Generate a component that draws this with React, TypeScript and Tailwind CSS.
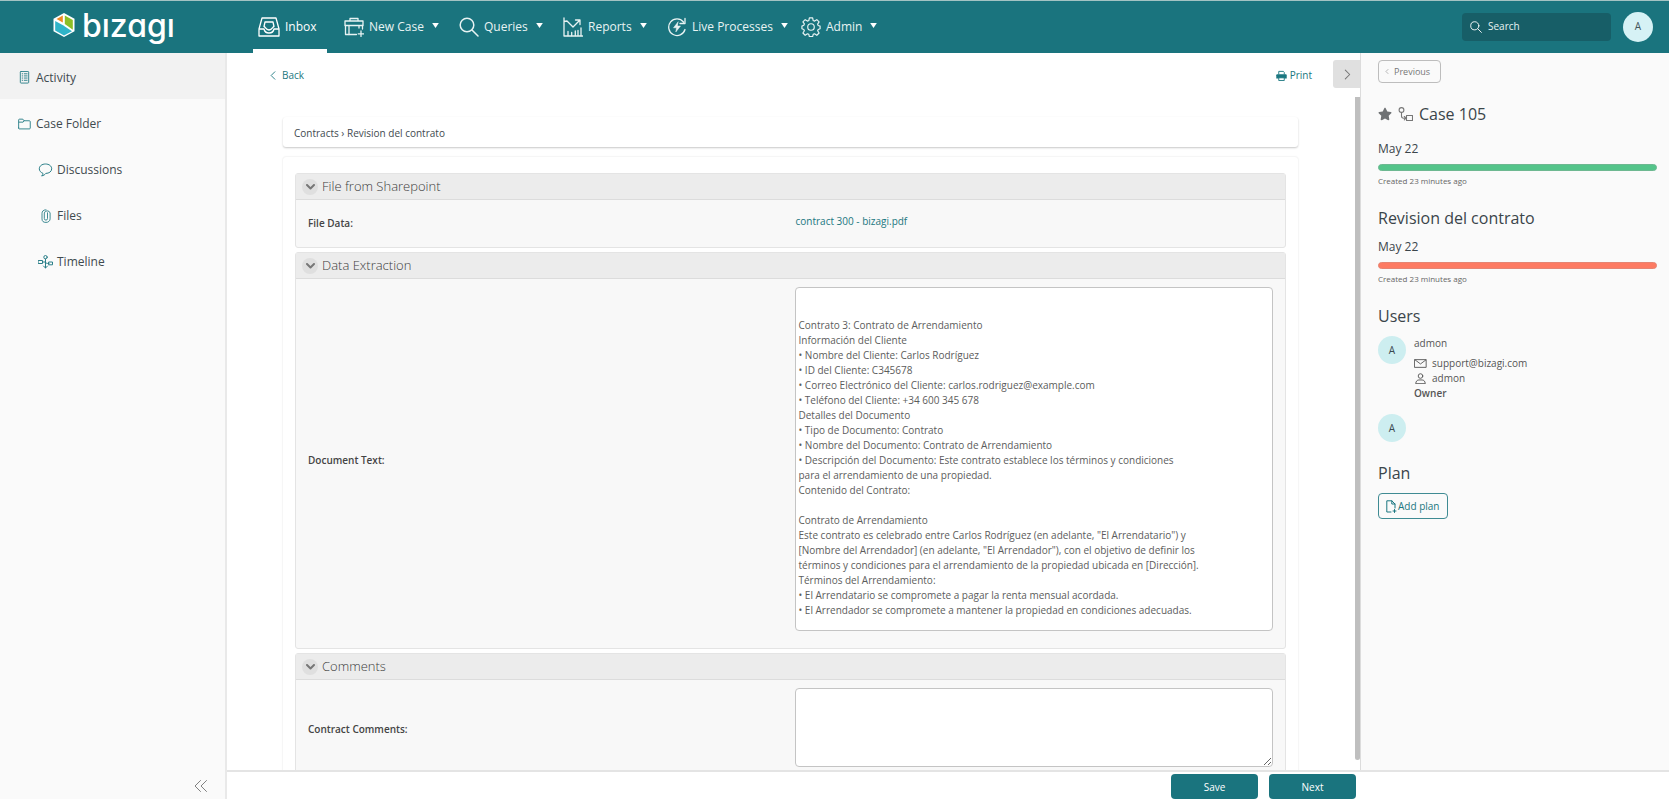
import React from "react";
import { FaStar } from "react-icons/fa";

type IconProps = { className?: string };

function Svg({ className, box, children, width = 1.3 }: IconProps & { box: string; children: React.ReactNode; width?: number }) {
  return (
    <svg className={className} viewBox={box} fill="none" stroke="currentColor" strokeWidth={width} strokeLinecap="round" strokeLinejoin="round" aria-hidden="true">
      {children}
    </svg>
  );
}

const InboxIcon = (p: IconProps) => (
  <Svg {...p} box="0 0 22 20">
    <path d="M4 1h14l3 11v7H1v-7z" />
    <path d="M1.500 12H6c.5 2.500 2 4 5 4s4.500-1.500 5-4h4.500" />
    <path d="M6 9.500 7 5h8l1 4.500c-1.200 0-1.800 3.500-5 3.500s-3.800-3.500-5-3.500z" />
  </Svg>
);

const NewCaseIcon = (p: IconProps) => (
  <Svg {...p} box="0 0 20 20">
    <path d="M12.500 17.500H1.500V8.500M18.500 8.500V12" />
    <path d="M1 4h18v4.500H1zM6 4V1.500h8V4M5 8.500v9M15 8.500v2.500" />
    <path d="M17 14v5.500M14.200 16.800h5.500" />
  </Svg>
);

const SearchIcon = (p: IconProps) => (
  <Svg {...p} box="0 0 20 20" width={1.5}>
    <circle cx="8" cy="8" r="6.800" />
    <path d="m13 13 6 6" />
  </Svg>
);

const ReportsIcon = (p: IconProps) => (
  <Svg {...p} box="0 0 20 20">
    <path d="M1 1v18h18.500M1 4.500 4 4l6 6 6.500-6.500M12.500 3H17v4.500" />
    <path d="M5 18.500v-4M8.700 18.500v-3M12.300 18.500v-4.500M15 18.500v-5M18 18.500V11" />
  </Svg>
);

const LiveIcon = (p: IconProps) => (
  <Svg {...p} box="0 0 20 20">
    <path d="M18 12.500A8.300 8.300 0 1 1 16.500 5M18 1.500v5h-5" />
    <path d="M11 5 6.500 10.800h3L8.800 15l4.700-6h-3z" fill="currentColor" strokeWidth="0.500" />
  </Svg>
);

const GearIcon = (p: IconProps) => (
  <Svg {...p} box="0 0 22 22">
    <circle cx="11" cy="11" r="3.600" />
    <path d="M9.200 1h3.600l.6 2.900 1.500.6 2.500-1.600 2.500 2.500-1.600 2.500.6 1.500 2.100.6v2.900l-2.100.9-.6 1.300 1.600 2.500-2.500 2.500-2.500-1.600-1.500.6-.6 2.400H9.200l-.6-2.400-1.500-.6-2.500 1.600-2.500-2.500 1.600-2.500-.6-1.300L1 12.900V10l2.100-.9.6-1.500-1.600-2.200 2.500-2.500 2.500 1.600 1.500-.6z" />
  </Svg>
);

const ActivityIcon = (p: IconProps) => (
  <Svg {...p} box="0 0 10 14" width={1}>
    <rect x=".500" y=".500" width="9" height="12.500" rx=".800" />
    <path d="M2.500 3h.5M4.800 3h3M2.500 5.300h.5M4.800 5.300h3M2.500 7.600h.5M4.800 7.600h3M2.500 10h.5M4.800 10h3" />
  </Svg>
);

const FolderIcon = (p: IconProps) => (
  <Svg {...p} box="0 0 14 12" width={1}>
    <path d="M.7 10.300V1.700c0-.6.300-.9.900-.9h3.600l1.300 1.700h5.800c.6 0 .9.400.9 1v6.800c0 .6-.3 1-.9 1H1.600c-.6 0-.9-.4-.9-1zM1 4h4.500l1-1.500" />
  </Svg>
);

const ChatIcon = (p: IconProps) => (
  <Svg {...p} box="0 0 14 14" width={1}>
    <path d="M3.500 12.800c.8-.8 1-1.600.8-2.600C2.200 9.500.8 7.800.8 5.800.8 3 3.500 1 7 1s6.200 2 6.200 4.800S10.500 10.400 7.300 10.400c-.8 1.200-2.200 2.200-3.800 2.400z" />
  </Svg>
);

const ClipIcon = (p: IconProps) => (
  <Svg {...p} box="0 0 12 14" width={0.9}>
    <path d="M8 3.800v5.700a1.600 1.600 0 0 1-3.200 0V4a3 2.900 0 0 1 5.800 0v5.800A3.900 3.600 0 0 1 6.500 13.400 3.900 3.600 0 0 1 2.500 9.800V4.500C2.500 2.500 3.500.8 6.500.8" />
  </Svg>
);

const TimelineIcon = (p: IconProps) => (
  <Svg {...p} box="0 0 15 14" width={1}>
    <circle cx="7.500" cy="2.200" r="1.700" />
    <rect x=".500" y="5.500" width="4" height="3" />
    <rect x="11" y="7" width="3.500" height="2.800" />
    <path d="M4.500 7h3v6M7.500 4v3c0 1 .8 1.500 3.500 1.500M5.500 11l2 2 2-2" />
  </Svg>
);

const PrintIcon = (p: IconProps) => (
  <svg className={p.className} viewBox="0 0 12 12" aria-hidden="true">
    <path d="M3 5V1.500h5L9 2.500V5" fill="#fff" stroke="currentColor" />
    <path d="M1.500 4.500h9c.8 0 1.200.5 1.200 1.200v3.600H.3V5.700c0-.7.400-1.200 1.200-1.200z" fill="currentColor" />
    <path d="M3 8.500h6v3H3z" fill="#fff" stroke="currentColor" />
  </svg>
);

const FlowIcon = (p: IconProps) => (
  <Svg {...p} box="0 0 15 15" width={1.1}>
    <circle cx="3.500" cy="3" r="2.400" />
    <path d="M3.500 5.500V9c0 1.600.8 2.200 2.200 2.200H8M6.300 9.500l1.700 1.700-1.700 1.700" />
    <rect x="8.500" y="8.500" width="6" height="5" />
  </Svg>
);

const MailIcon = (p: IconProps) => (
  <Svg {...p} box="0 0 14 10" width={1}>
    <rect x=".700" y=".700" width="12.600" height="8.600" />
    <path d="m1 1 6 4.500L13 1" />
  </Svg>
);

const PersonIcon = (p: IconProps) => (
  <Svg {...p} box="0 0 12 12" width={1}>
    <circle cx="6" cy="3.300" r="2.500" />
    <path d="M.800 11.200c.2-2.400 1.700-3.600 3.500-3.600h3.400c1.800 0 3.300 1.200 3.500 3.600z" />
  </Svg>
);

const AddDocIcon = (p: IconProps) => (
  <Svg {...p} box="0 0 11 13" width={1}>
    <path d="M5 12H.8V.8h5L9 4v4M5.800.8V4H9M8.500 9.500v3M7 11h3" />
  </Svg>
);

const Chevron = ({ className, d }: IconProps & { d: string }) => (
  <Svg className={className} box="0 0 8 12" width={1.2}>
    <path d={d} />
  </Svg>
);
const LEFT = "M6.500 1 1.500 6l5 5";
const RIGHT = "m1.500 1 5 5-5 5";

function Logo() {
  return (
    <a href="#home" aria-label="bizagi" className="flex w-[253px] shrink-0 items-center gap-1.5 pl-[52px] text-white">
      <svg viewBox="0 0 24 26" className="mb-1 h-[26px] w-6" aria-hidden="true">
        <path d="M12 1 22.500 6.800v12.400L12 25 1.500 19.200V6.800z" fill="#fff" />
        <path d="M10.800 3.500V10.500L4.500 7z" fill="#f08a24" />
        <path d="M12.800 3.500 20.800 8v9.800L12.800 12z" fill="#8cbf26" />
        <path d="M3.200 9 11 13.200 20 19.200 12 23.500 3.200 18.500z" fill="#2fb4c8" />
      </svg>
      <span className="pb-0.5 font-['Inter',sans-serif] text-[32px] leading-[48px] font-medium [font-feature-settings:'cv11']">bızagı</span>
    </a>
  );
}

const menus = [
  { label: "New Case", Icon: NewCaseIcon, width: "w-[115px]" },
  { label: "Queries", Icon: SearchIcon, width: "w-[104px]" },
  { label: "Reports", Icon: ReportsIcon, width: "w-[104px]" },
  { label: "Live Processes", Icon: LiveIcon, width: "w-[134px]" },
  { label: "Admin", Icon: GearIcon, width: "w-[90px]" },
];

function Header() {
  return (
    <header className="flex h-[53px] shrink-0 border-t border-[#a3c3c3] bg-[#1a747e] text-xs text-white">
      <Logo />
      <nav className="flex">
        <a href="#inbox" className="mr-[17px] flex w-[74px] items-center gap-[5px] border-b-4 border-white pt-1 pl-[5px]">
          <InboxIcon className="h-5 w-[22px]" />
          Inbox
        </a>
        {menus.map(({ label, Icon, width }) => (
          <button key={label} className={`flex items-center gap-[5px] whitespace-nowrap text-[#e8f3f3] ${width}`}>
            <Icon className="size-5 shrink-0" />
            {label}
            <svg viewBox="0 0 8 6" className="mb-[3px] ml-[3px] h-[5px] w-[7px] fill-white" aria-hidden="true">
              <path d="M0 0h8L4 6z" />
            </svg>
          </button>
        ))}
      </nav>
      <div className="ml-auto flex items-center gap-3 pr-4 pb-px">
        <label className="flex h-7 w-[149px] items-center gap-1.5 rounded bg-[#175e67] px-2">
          <SearchIcon className="size-3 shrink-0" />
          <input type="search" aria-label="Search" placeholder="Search" className="w-full min-w-0 bg-transparent text-[10px] outline-none placeholder:text-[#e8f3f3]" />
        </label>
        <button className="size-[30px] rounded-full bg-[#d6f2f5] text-[10px] text-[#44565a]">A</button>
      </div>
    </header>
  );
}

const folderItems = [
  { label: "Discussions", Icon: ChatIcon },
  { label: "Files", Icon: ClipIcon },
  { label: "Timeline", Icon: TimelineIcon },
];

function Sidebar() {
  return (
    <aside className="flex w-[227px] shrink-0 flex-col border-r-2 border-[#e9e9e9] bg-[#fafafa] text-xs text-[#3f4a4f]">
      <a href="#activity" className="flex h-[46px] items-center gap-[5px] bg-[#f2f2f2] pt-[3px] pl-[18px]">
        <ActivityIcon className="h-[13px] w-[13px] text-[#2a7f88]" />
        Activity
      </a>
      <a href="#folder" className="flex h-[46px] items-center gap-[5px] pt-[3px] pl-[18px]">
        <FolderIcon className="h-3 w-[13px] text-[#2a7f88]" />
        Case Folder
      </a>
      {folderItems.map(({ label, Icon }) => (
        <a key={label} href={`#${label}`} className="flex h-[46px] items-center gap-1 pt-[3px] pl-[38px]">
          <Icon className="h-[14px] w-[15px] text-[#2a7f88]" />
          {label}
        </a>
      ))}
      <button aria-label="Collapse menu" className="mt-auto mb-[7px] ml-[194px] w-[14px] text-[#808080]">
        <Svg className="h-3 w-[14px]" box="0 0 14 12" width={1}>
          <path d="m6.500.5-5.500 5.500 5.500 5.500M12.500.5 7 6l5.500 5.500" />
        </Svg>
      </button>
    </aside>
  );
}

function Section({ title, children }: { title: string; children: React.ReactNode }) {
  return (
    <section className="rounded-[3px] border border-[#e4e4e4] bg-[#f8f8f8]">
      <h2 className="flex h-[26px] items-center gap-1 border-b border-[#dcdcdc] bg-[#ececec] pl-1.5 text-[13px] font-light text-[#3c3c3c]">
        <button aria-label={`Toggle ${title}`} className="flex size-4 items-center justify-center rounded-full bg-[#dfdfdf] text-[#777]">
          <Svg className="h-[6px] w-[9px]" box="0 0 9 6" width={2}>
            <path d="m1 1 3.500 3.500L8 1" />
          </Svg>
        </button>
        {title}
      </h2>
      {children}
    </section>
  );
}

const documentText = `

Contrato 3: Contrato de Arrendamiento
Información del Cliente
• Nombre del Cliente: Carlos Rodríguez
• ID del Cliente: C345678
• Correo Electrónico del Cliente: carlos.rodriguez@example.com
• Teléfono del Cliente: +34 600 345 678
Detalles del Documento
• Tipo de Documento: Contrato
• Nombre del Documento: Contrato de Arrendamiento
• Descripción del Documento: Este contrato establece los términos y condiciones
para el arrendamiento de una propiedad.
Contenido del Contrato:

Contrato de Arrendamiento
Este contrato es celebrado entre Carlos Rodríguez (en adelante, "El Arrendatario") y
[Nombre del Arrendador] (en adelante, "El Arrendador"), con el objetivo de definir los
términos y condiciones para el arrendamiento de la propiedad ubicada en [Dirección].
Términos del Arrendamiento:
• El Arrendatario se compromete a pagar la renta mensual acordada.
• El Arrendador se compromete a mantener la propiedad en condiciones adecuadas.`;

function Main() {
  const label = "pt-[3px] pl-3 text-[10px] font-semibold text-[#444]";
  const area = "block w-full rounded border border-[#c4c4c4] bg-white px-[3px] text-[10px] leading-[15px] text-[#5c5c5c] outline-none";
  return (
    <main className="flex min-h-0 min-w-0 flex-1 flex-col bg-white">
      <div className="flex h-11 shrink-0 items-start pt-[7px] text-[10px] text-[#1b7780]">
        <a href="#back" className="ml-[43px] flex h-[31px] items-center gap-1.5">
          <Chevron className="h-[9px] w-[6px]" d={LEFT} />
          Back
        </a>
        <a href="#print" className="mr-[21px] ml-auto flex h-[31px] items-center gap-[3px]">
          <PrintIcon className="size-[11px]" />
          Print
        </a>
        <button aria-label="Hide panel" className="flex h-7 w-[27px] items-center justify-center rounded-l-[3px] bg-[#e0e0e0] pl-0.5 text-[#777]">
          <Chevron className="h-[11px] w-[7px]" d={RIGHT} />
        </button>
      </div>
      <div className="flex min-h-0 flex-1">
        <div className="min-h-0 flex-1 overflow-hidden pt-5 pr-[57px] pl-14">
          <p className="flex h-[30px] items-center rounded-[3px] bg-white pt-0.5 pl-[11px] text-[10px] text-[#3f4a4f] shadow-[0_1px_2px_rgba(0,0,0,0.22)]">
            Contracts › Revision del contrato
          </p>
          <form className="mt-2.5 flex flex-col gap-1 rounded-[3px] px-3 pt-4 pb-4 shadow-[0_0_2px_rgba(0,0,0,0.14)]">
            <Section title="File from Sharepoint">
              <div className="grid h-[47px] grid-cols-2 items-center pb-1">
                <span className={label}>File Data:</span>
                <a href="#contract" className="pl-[5px] text-[10px] text-[#1b7780]">contract 300 - bizagi.pdf</a>
              </div>
            </Section>
            <Section title="Data Extraction">
              <div className="grid grid-cols-2 items-center pt-2 pb-[17px]">
                <label htmlFor="document-text" className={label}>Document Text:</label>
                <div className="pr-3 pl-1">
                  <textarea id="document-text" className={`${area} h-[344px] resize-none overflow-hidden`} defaultValue={documentText} />
                </div>
              </div>
            </Section>
            <Section title="Comments">
              <div className="grid grid-cols-2 items-center pt-2 pb-4">
                <label htmlFor="comments" className={label}>Contract Comments:</label>
                <div className="pr-3 pl-1">
                  <textarea id="comments" className={`${area} h-[79px] resize-y`} />
                </div>
              </div>
            </Section>
          </form>
        </div>
        <div className="mb-2.5 w-[5px] rounded-b bg-[#bfbfbf]" />
      </div>
    </main>
  );
}

function Avatar() {
  return <span className="flex size-7 shrink-0 items-center justify-center rounded-full bg-[#cdeef0] text-[10px] text-[#3b4a50]">A</span>;
}

function Deadline({ bar }: { bar: string }) {
  return (
    <>
      <p className="text-xs leading-4">May 22</p>
      <div className={`mt-[7px] h-[7px] rounded-full border ${bar}`} />
      <p className="mt-1 text-[8px] leading-3 text-[#666]">Created 23 minutes ago</p>
    </>
  );
}

function CasePanel() {
  return (
    <aside className="w-[309px] shrink-0 overflow-hidden border-l border-[#dcdcdc] bg-[#fafafa] pt-[7px] pr-3 pl-[17px] text-[#3b454a]">
      <button className="flex h-[23px] items-center gap-[5px] rounded border border-[#bdbdbd] pr-2.5 pl-1.5 text-[9px] text-[#777]">
        <Chevron className="h-[5px] w-[4px]" d={LEFT} />
        Previous
      </button>
      <h2 className="mt-5 flex items-center text-base leading-[22px]">
        <FaStar className="mr-1.5 size-[14px] text-[#6f7274]" />
        <FlowIcon className="mr-1.5 size-[15px] text-[#777]" />
        Case 105
      </h2>
      <div className="mt-4">
        <Deadline bar="border-[#6db891] bg-[#54c48a]" />
      </div>
      <h2 className="mt-5 text-base leading-[22px]">Revision del contrato</h2>
      <div className="mt-2.5">
        <Deadline bar="border-[#e58472] bg-[#fd7a62]" />
      </div>
      <h2 className="mt-5 text-base leading-[22px]">Users</h2>
      <div className="mt-[9px] flex gap-2 text-[10px] text-[#555]">
        <Avatar />
        <div className="leading-[15px]">
          <p className="mb-[5px]">admon</p>
          <p className="flex items-center gap-[5px]">
            <MailIcon className="h-[9px] w-[13px]" />
            support@bizagi.com
          </p>
          <p className="flex items-center gap-[5px]">
            <PersonIcon className="h-[11px] w-[13px]" />
            admon
          </p>
          <p className="font-semibold">Owner</p>
        </div>
      </div>
      <div className="mt-[13px]">
        <Avatar />
      </div>
      <h2 className="mt-5 text-base leading-[22px]">Plan</h2>
      <button className="mt-[9px] flex h-[26px] items-center gap-px rounded border border-[#3f8b93] px-[7px] text-[10px] text-[#1b7780]">
        <AddDocIcon className="h-[13px] w-[11px]" />
        Add plan
      </button>
    </aside>
  );
}

export default function App() {
  const action = "h-[25px] w-[87px] rounded bg-[#1a747e] pt-px text-center text-[10px] font-medium text-white";
  return (
    <div className="flex h-screen flex-col overflow-hidden font-['Open_Sans',sans-serif]">
      <Header />
      <div className="flex min-h-0 flex-1">
        <Sidebar />
        <div className="flex min-w-0 flex-1 flex-col">
          <div className="flex min-h-0 flex-1">
            <Main />
            <CasePanel />
          </div>
          <footer className="flex shrink-0 justify-end gap-[11px] border-t-2 border-[#e4e4e4] bg-white pt-0.5 pr-[313px]">
            <button className={action}>Save</button>
            <button className={action}>Next</button>
          </footer>
        </div>
      </div>
    </div>
  );
}
